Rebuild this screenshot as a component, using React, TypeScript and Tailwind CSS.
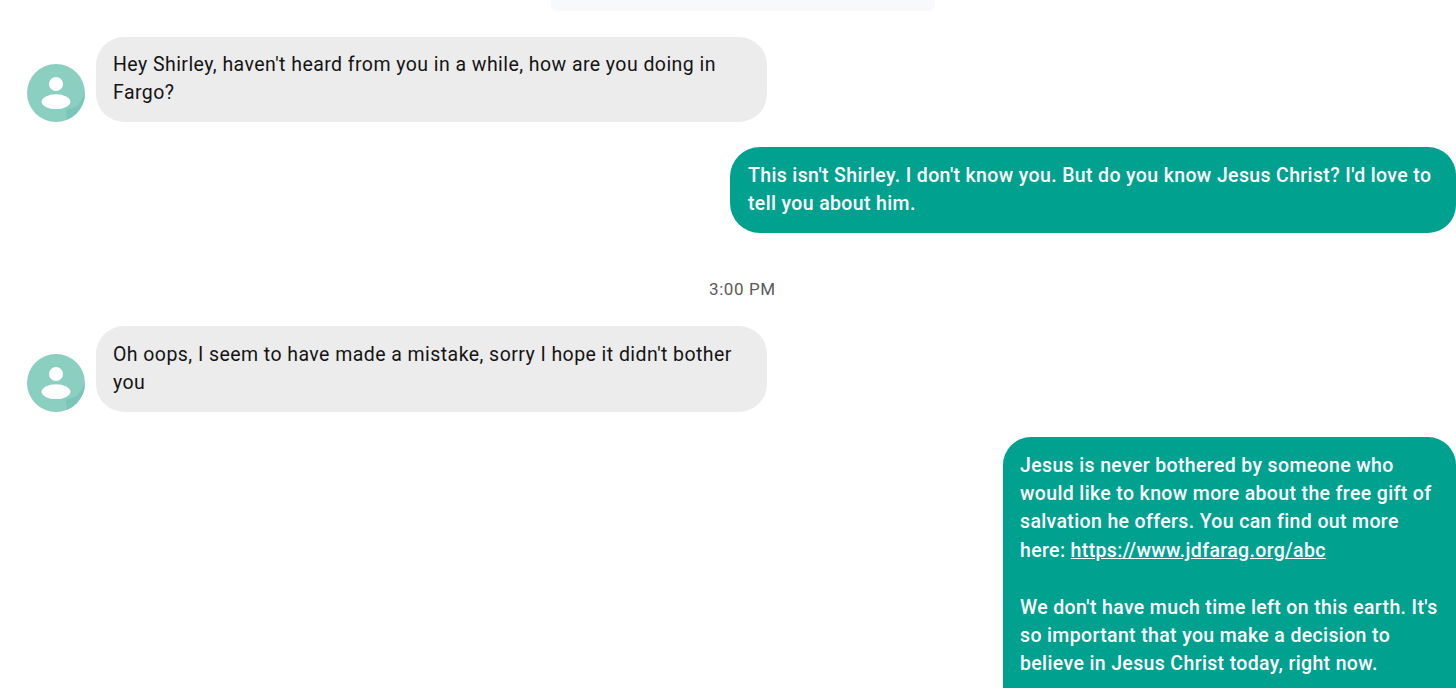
function Avatar({ id }: { id: string }) {
  return (
    <svg width="58" height="58" viewBox="0 0 58 58" className="shrink-0">
      <defs>
        <clipPath id={id}>
          <circle cx="29" cy="29" r="29" />
        </clipPath>
      </defs>
      <circle cx="29" cy="29" r="29" fill="#8bcfc1" />
      <path d="M58 30 L50 42 L39 46 L40 58 L58 58 Z" fill="#7bc6ba" clipPath={`url(#${id})`} />
      <circle cx="29" cy="20" r="7" fill="#fff" />
      <ellipse cx="29" cy="37.7" rx="14.4" ry="7.4" fill="#fff" />
    </svg>
  );
}

function Incoming({ children, className, bubble, id }: { children: React.ReactNode; className: string; bubble: string; id: string }) {
  return (
    <div className={`flex items-end gap-[11px] pl-[27px] ${className}`}>
      <Avatar id={id} />
      <div className={`w-[671px] rounded-[28px] bg-[#ececec] pl-[17px] pr-[20px] pb-[14px] text-[19.5px] leading-[28.4px] tracking-[0.44px] text-[#141414] ${bubble}`}>
        {children}
      </div>
    </div>
  );
}

export default function App() {
  return (
    <div className="h-[688px] w-[1456px] overflow-hidden bg-white font-['Roboto',sans-serif]">
      <div className="ml-[551px] h-[11px] w-[384px] rounded-b-[6px] bg-[#f8f9fb]" />
      <Incoming id="a1" className="mt-[26px]" bubble="pt-[14px]">
        Hey Shirley, haven't heard from you in a while, how are you doing in Fargo?
      </Incoming>
      <div className="mt-[25px] flex justify-end">
        <div className="h-[86px] w-[726px] rounded-l-[30px] rounded-r-[28px] bg-[#00a18f] pl-[18px] pr-[16px] pt-[15px] text-[19.5px] font-medium leading-[28.4px] tracking-[0.36px] text-white">
          This isn't Shirley. I don't know you. But do you know Jesus Christ? I'd love to tell you about him.
        </div>
      </div>
      <div className="mt-[44px] pl-[709px] text-[17px] leading-[24px] tracking-[0.6px] text-[#5a5a5a]">
        3:00 PM
      </div>
      <Incoming id="a2" className="mt-[25px]" bubble="pt-[15px]">
        Oh oops, I seem to have made a mistake, sorry I hope it didn't bother you
      </Incoming>
      <div className="mt-[25px] flex justify-end">
        <div className="h-[300px] w-[453px] rounded-t-[28px] bg-[#00a18f] pl-[17px] pr-[10px] pt-[15px] text-[19.5px] font-medium leading-[28.4px] tracking-[0.36px] text-white">
          <p>
            Jesus is never bothered by someone who would like to know more about the free gift of salvation he offers. You can find out more here:{" "}
            <span className="underline">https://www.jdfarag.org/abc</span>
          </p>
          <p className="mt-[28.4px]">
            We don't have much time left on this earth. It's so important that you make a decision to believe in Jesus Christ today, right now.
          </p>
        </div>
      </div>
    </div>
  );
}
